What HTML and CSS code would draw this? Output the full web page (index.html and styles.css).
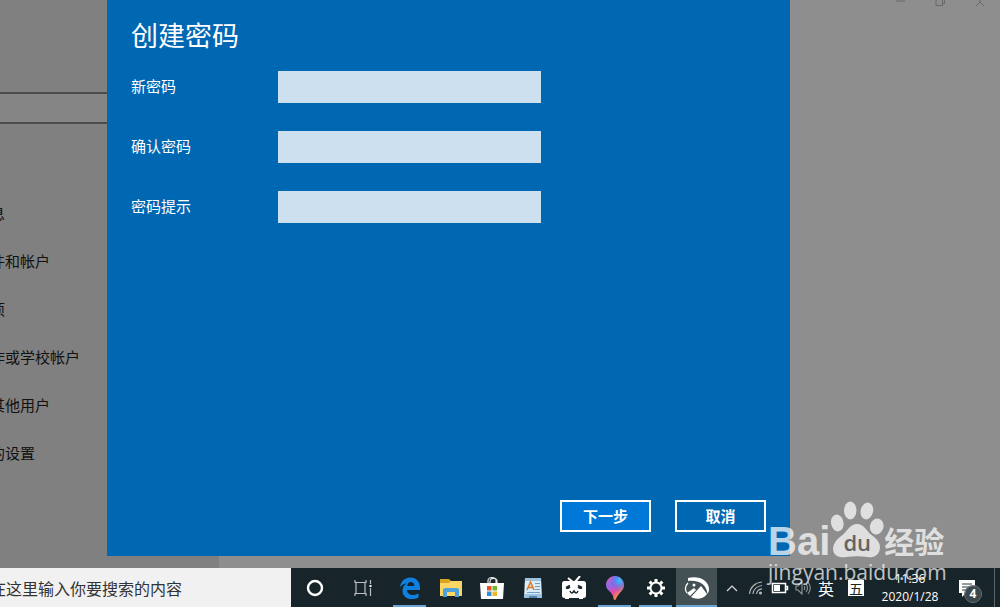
FILE: index.html
```html
<!DOCTYPE html>
<html lang="zh-CN">
<head>
  <meta charset="UTF-8" />
  <meta name="viewport" content="width=device-width, initial-scale=1.0" />
  <title>创建密码</title>
  <link rel="stylesheet" href="styles.css">
</head>
<body>

  <main class="desktop">
    <aside class="sidebar">
      <input class="buscar" type="search" aria-label="查找设置">
      <nav>
        <a href="#info">息</a>
        <a href="#mail">件和帐户</a>
        <a href="#login">项</a>
        <a href="#work">作或学校帐户</a>
        <a href="#family">其他用户</a>
        <a href="#sync">的设置</a>
      </nav>
    </aside>

    <div class="content">
      <div class="window-buttons">
        <button aria-label="最小化"><svg width="12" height="8" viewBox="0 0 12 8"><path d="M2 1h9" /></svg></button>
        <button aria-label="还原"><svg width="12" height="8" viewBox="0 0 12 8"><path d="M2 0v5.500h6.500V0M8.500 3.500h2V0" /></svg></button>
        <button aria-label="关闭"><svg width="12" height="8" viewBox="0 0 12 8"><path d="M2 6l4-4 4 4M6 0v2" /></svg></button>
      </div>
    </div>

    <form class="dialog">
      <h1>创建密码</h1>
      <div class="field">
        <label for="password">新密码</label>
        <input id="password" type="password">
      </div>
      <div class="field">
        <label for="confirm">确认密码</label>
        <input id="confirm" type="password">
      </div>
      <div class="field">
        <label for="hint">密码提示</label>
        <input id="hint" type="text">
      </div>
      <div class="actions">
        <button type="button" class="primary">下一步</button>
        <button type="button">取消</button>
      </div>
    </form>
  </main>

  <footer class="taskbar">
    <div class="search">
      <input type="text" placeholder="在这里输入你要搜索的内容" aria-label="搜索">
    </div>

    <div class="system">
      <button aria-label="Cortana">
        <svg width="20" height="20" viewBox="0 0 20 20"><circle cx="10" cy="10" r="7" fill="none" stroke="#fff" stroke-width="2.400" /></svg>
      </button>
      <button aria-label="任务视图">
        <svg width="20" height="20" viewBox="0 0 20 20" fill="none" stroke="#b9bfc1" stroke-width="1.200">
          <path d="M2 2v2.500h11V2M2 18v-2.500h11V18M3 4.500v11M12 4.500v11M17.500 2v4M17.500 10v8" /><path d="M16.500 7h2v2h-2z" fill="#fff" stroke="none" />
        </svg>
      </button>
    </div>

    <div class="apps">
      <button class="open" aria-label="Edge">
        <svg width="22" height="22" viewBox="0 0 22 22"><path fill="#0f7fe0" d="M1 10C2 4 6 .500 11.500.500 17.500.500 21 5 21 10.500V13H8c0 3.500 3 5 6 5 2.200 0 4-.600 5.500-1.500v4C17.500 21.500 15.200 22 13 22 7 22 3.500 18.500 3.500 13.700c0-3.200 1.700-6 4.500-7.500C5 6.600 2.600 8 1 10zM8.200 9h7c0-2.500-1.200-4-3.500-4C9.800 5 8.600 6.600 8.200 9z" /></svg>
      </button>
      <button aria-label="文件资源管理器">
        <svg width="22" height="20" viewBox="0 0 22 20"><path fill="#dca321" d="M0 1h9l2 2h11v5H0z" /><path fill="#fbd665" d="M0 5h9l2-2h11v15H0z" /><path fill="#4aa2d9" d="M3 19v-8l2-1h12l2 1v8h-4v-5H7v5z" /></svg>
      </button>
      <button aria-label="Microsoft Store">
        <svg width="24" height="24" viewBox="0 0 24 24"><path d="M8 8V4.500C8 .500 16 .500 16 4.500V8M10 8V5c0-4 7-3 7 0v2" fill="none" stroke="#e5e5e5" stroke-width="1.200" /><path fill="#fff" d="M0 7h24l-1 16H1z" /><path fill="#e5502d" d="M7 10h4.500v4.500H7z" /><path fill="#72b52c" d="M12.500 10H17v4.500h-4.500z" /><path fill="#2b92d6" d="M7 15.500h4.500V20H7z" /><path fill="#f3b725" d="M12.500 15.500H17V20h-4.500z" /></svg>
      </button>
      <button aria-label="写字板">
        <svg width="20" height="22" viewBox="0 0 20 22"><path fill="#d9edf8" d="M2 1h16l1 20H1z" /><path fill="#9bc3e1" d="M2 1h16v3H2zM1 17h18v4H1z" /><path fill="none" stroke="#6e9fc3" d="M12 6.500h5M12 9.500h5M12 12.500h5M4 15.500h13" /><path fill="none" stroke="#e07b2c" stroke-width="1.600" d="M4 13l3.500-8 3.500 8M5.500 10.500h4" /><path fill="#5083ae" d="M6 19h8v2H6z" /></svg>
      </button>
      <button aria-label="哔哩哔哩">
        <svg width="24" height="24" viewBox="0 0 24 24"><path d="M6 2l5 4M18 0l-5 6" stroke="#fff" stroke-width="2" /><rect y="5" width="24" height="17" rx="2.500" fill="#fff" /><path fill="#fff" d="M3 21h4v2H3zM17 21h4v2h-4z" /><path d="M4 11.500l4-2M16 9.500l4 2M4 12q2 1 4-1M16 11q2 2 4 1M8 15q1.500 4 4 0 2.500 4 4 0" fill="none" stroke="#17272b" stroke-width="1.500" /></svg>
      </button>
      <button class="open" aria-label="画图 3D">
        <svg width="20" height="26" viewBox="0 0 20 26">
          <defs>
            <linearGradient id="drop" x1="0" y1="0" x2=".7" y2="1"><stop offset="0" stop-color="#ef5fa8" /><stop offset=".35" stop-color="#8e69ed" /><stop offset=".65" stop-color="#e64aa9" /><stop offset="1" stop-color="#ffad1f" /></linearGradient>
            <radialGradient id="shine" cx=".75" cy=".2" r=".5"><stop offset="0" stop-color="#28cdfb" /><stop offset="1" stop-color="#386bf2" stop-opacity="0" /></radialGradient>
          </defs>
          <path fill="url(#drop)" d="M10 1c5 0 9 4 9 9 0 6-6 8-8 14-.500 1.500-2.500 1-2.500-.500C8.500 17 1 16 1 10c0-5 4-9 9-9z" />
          <path fill="url(#shine)" d="M10 1c5 0 9 4 9 9 0 6-6 8-8 14-.500 1.500-2.500 1-2.500-.500C8.500 17 1 16 1 10c0-5 4-9 9-9z" />
        </svg>
      </button>
      <button class="open" aria-label="设置">
        <svg width="20" height="20" viewBox="0 0 20 20" fill="none" stroke="#fff"><circle cx="10" cy="10" r="5.500" stroke-width="2" /><path stroke-width="3" d="M10 1v3M10 16v3M1 10h3M16 10h3M3.600 3.600l2.200 2.200M14.200 14.200l2.200 2.200M3.600 16.400l2.200-2.200M14.200 5.800l2.200-2.200" /></svg>
      </button>
      <button class="open active" aria-label="照片">
        <svg width="26" height="24" viewBox="0 0 26 24"><path fill="#fff" d="M4 2C14-1 25 4 25 13c0 2-.500 3.500-1.500 5C23 9 15 3.500 4 5z" /><path d="M4 7C1 10 1 14 3 17" fill="none" stroke="#fff" stroke-width="1.300" /><circle cx="10" cy="9" r="1.500" fill="#fff" /><path fill="#fff" d="M3 17l7-5 2 2-6 6zM7 21l10-11 6 8c-3 5-11 6-16 3z" /></svg>
      </button>
    </div>

    <div class="tray">
      <button aria-label="显示隐藏的图标"><svg width="12" height="8" viewBox="0 0 12 8"><path d="M1 7l5-5 5 5" fill="none" stroke="#ddd" stroke-width="1.200" /></svg></button>
      <button aria-label="网络"><svg width="16" height="16" viewBox="0 0 16 16" fill="none" stroke="#a9b0b2" stroke-width="1.200"><path d="M1.500 14C2 7.500 7 2.500 14 2M5 14c.500-4.500 4-8 9-8.500M8.500 14c.500-3 2.500-5 5.500-5.200" /><circle cx="12.500" cy="13" r="1" fill="#ddd" /></svg></button>
      <button aria-label="电池"><svg width="18" height="12" viewBox="0 0 18 12"><path d="M1.500 1.500h13v9h-13zM15 4.500h1.500v3H15" fill="none" stroke="#fff" stroke-width="1.500" /><path fill="#fff" d="M3 3h6v6H3z" /></svg></button>
      <button class="volume" aria-label="音量"><svg width="16" height="14" viewBox="0 0 16 14" fill="none" stroke="#8e979a" stroke-width="1.100"><path d="M1 5h2l4-4v12L3 9H1zM9 5q1.500 2 0 4M11 3q3 4 0 8M13 1q4.500 6 0 12" /></svg></button>
      <button class="lang">英</button>
      <button class="ime"><span>五</span></button>
      <button class="clock"><span>11:36</span><span>2020/1/28</span></button>
      <button class="notices" aria-label="通知">
        <svg width="18" height="18" viewBox="0 0 18 18"><path fill="#fff" d="M1 1h16v13H8l-4 4v-4H1z" /><path d="M4 5h10M4 8h10M4 11h6" stroke="#2b3a3e" /></svg>
        <span class="badge">4</span>
      </button>
      <button class="show-desktop" aria-label="显示桌面"></button>
    </div>
  </footer>

  <div class="watermark">
    <div class="logo">
      <span class="bai">Bai</span>
      <span class="paw">
        <svg width="54" height="58" viewBox="0 0 52 58" preserveAspectRatio="none" fill="#fff"><ellipse cx="7" cy="23" rx="6" ry="8.500" transform="rotate(-10 7 23)" /><ellipse cx="19.500" cy="10.500" rx="6" ry="9" /><ellipse cx="35.500" cy="11" rx="6" ry="8.500" transform="rotate(12 35.500 11)" /><ellipse cx="45" cy="26.500" rx="6.500" ry="8" transform="rotate(15 45 26.500)" /><path d="M26 24c7 0 9 7 14 11 5 4 9 8 8 14-1 7-7 9-12 8-7-1-13-1-20 0C9 58 3 56 3 49c0-6 4-10 9-14 5-4 7-11 14-11z" /></svg>
        <span class="du">du</span>
      </span>
      <span class="jingyan">经验</span>
    </div>
    <div class="url">jingyan.baidu.com</div>
  </div>

</body>
</html>
```

FILE: styles.css
```css
* { margin: 0; padding: 0; box-sizing: border-box; }

body {
  font-family: "Noto Sans CJK SC", sans-serif;
  font-size: 15px;
  height: 100vh;
  display: flex;
  flex-direction: column;
  overflow: hidden;
  position: relative;
}

button, input {
  font-family: inherit;
  border: none;
  border-radius: 0;
  outline: none;
}

button {
  background: none;
  color: white;
}

svg { display: block; }

/* Ventana de configuración */
.desktop {
  flex: 1;
  display: flex;
  position: relative;
  background-color: #8e8e8e;
}

.sidebar {
  width: 219px;
  padding-top: 92px;
  background-color: #808080;
  overflow: hidden;
}

.buscar {
  display: block;
  width: 200px;
  height: 32px;
  background-color: #858585;
  border-top: 2px solid #4c4c4c;
  border-bottom: 2px solid #4c4c4c;
}

.sidebar nav {
  margin: 65px 0 0 -10px;
}

.sidebar a {
  display: block;
  line-height: 48px;
  color: #111;
  text-decoration: none;
}

.content { flex: 1; }

.window-buttons {
  display: flex;
  justify-content: flex-end;
}

.window-buttons button {
  width: 40px;
  height: 8px;
  display: flex;
  justify-content: center;
}

.window-buttons path {
  fill: none;
  stroke: #686868;
}

/* Diálogo */
.dialog {
  position: absolute;
  top: 0;
  left: 107px;
  right: 210px;
  bottom: 12px;
  display: flex;
  flex-direction: column;
  padding: 15px 24px 24px;
  background-color: #0067b3;
  color: white;
}

.dialog h1 {
  font-size: 27px;
  font-weight: normal;
  line-height: 40px;
  margin-bottom: 16px;
}

.field {
  display: flex;
  margin-bottom: 28px;
}

.field label {
  width: 147px;
  line-height: 30px;
}

.field input {
  width: 263px;
  height: 32px;
  padding: 0 8px;
  background-color: #cce0ef;
}

.actions {
  display: flex;
  justify-content: flex-end;
  gap: 24px;
  margin-top: auto;
}

.actions button {
  width: 91px;
  height: 32px;
  border: 2px solid white;
  font-size: 15px;
  font-weight: bold;
  line-height: 28px;
}

.actions .primary {
  background-color: #0078d7;
}

/* Barra de tareas */
.taskbar {
  display: flex;
  height: 39px;
  background-color: #17252a;
}

.search {
  width: 291px;
  background-color: #f1f1f1;
  overflow: hidden;
}

.search input {
  width: 290px;
  height: 39px;
  margin-left: -10px;
  font-size: 16px;
  background: none;
}

.search input::placeholder {
  color: #333;
  opacity: 1;
}

.system, .apps, .tray {
  display: flex;
}

.taskbar button {
  display: flex;
  align-items: center;
  justify-content: center;
}

.system button { width: 48px; }

.apps { margin-left: 2px; }

.apps button {
  width: 41px;
  position: relative;
}

.open::after {
  content: "";
  position: absolute;
  left: 4px;
  right: 4px;
  bottom: 0;
  height: 2px;
  background-color: #6aa5d3;
}

.active { background-color: #435054; }

.active::after {
  left: 0;
  right: 0;
}

.tray { margin-left: auto; }

.tray button { width: 24px; }

.tray .volume { width: 22px; }

.tray .lang {
  font-size: 16px;
  line-height: 38px;
}

.tray .ime { width: 36px; }

.ime span {
  width: 16px;
  font-size: 14px;
  line-height: 16px;
  background-color: white;
  color: #17252a;
}

.tray .clock {
  width: 72px;
  flex-direction: column;
  font-family: "Open Sans", sans-serif;
  font-size: 12px;
  line-height: 18px;
}

.tray .notices {
  width: 48px;
  padding-right: 6px;
  position: relative;
}

.badge {
  position: absolute;
  left: 19px;
  top: 18px;
  width: 16px;
  border-radius: 50%;
  background-color: #3b474b;
  font: bold 12px/16px "Open Sans", sans-serif;
  outline: 1px solid #69757a;
}

.tray .show-desktop {
  width: 6px;
  border-left: 1px solid #5b676b;
}

/* Marca de agua */
.watermark {
  position: absolute;
  right: 53px;
  bottom: 23px;
  width: 179px;
  color: white;
  opacity: 0.72;
  pointer-events: none;
}

.logo {
  display: flex;
  align-items: flex-end;
  margin-bottom: 2px;
}

.bai {
  font: bold 40px/34px "Liberation Sans", sans-serif;
}

.paw {
  position: relative;
}

.du {
  position: absolute;
  left: 0;
  right: 0;
  bottom: 4px;
  text-align: center;
  font: 600 22px/24px "Open Sans", sans-serif;
  color: #555;
}

.jingyan {
  font-size: 30px;
  font-weight: bold;
  line-height: 36px;
}

.url {
  font: 500 21px/24px "Open Sans", sans-serif;
}
```
